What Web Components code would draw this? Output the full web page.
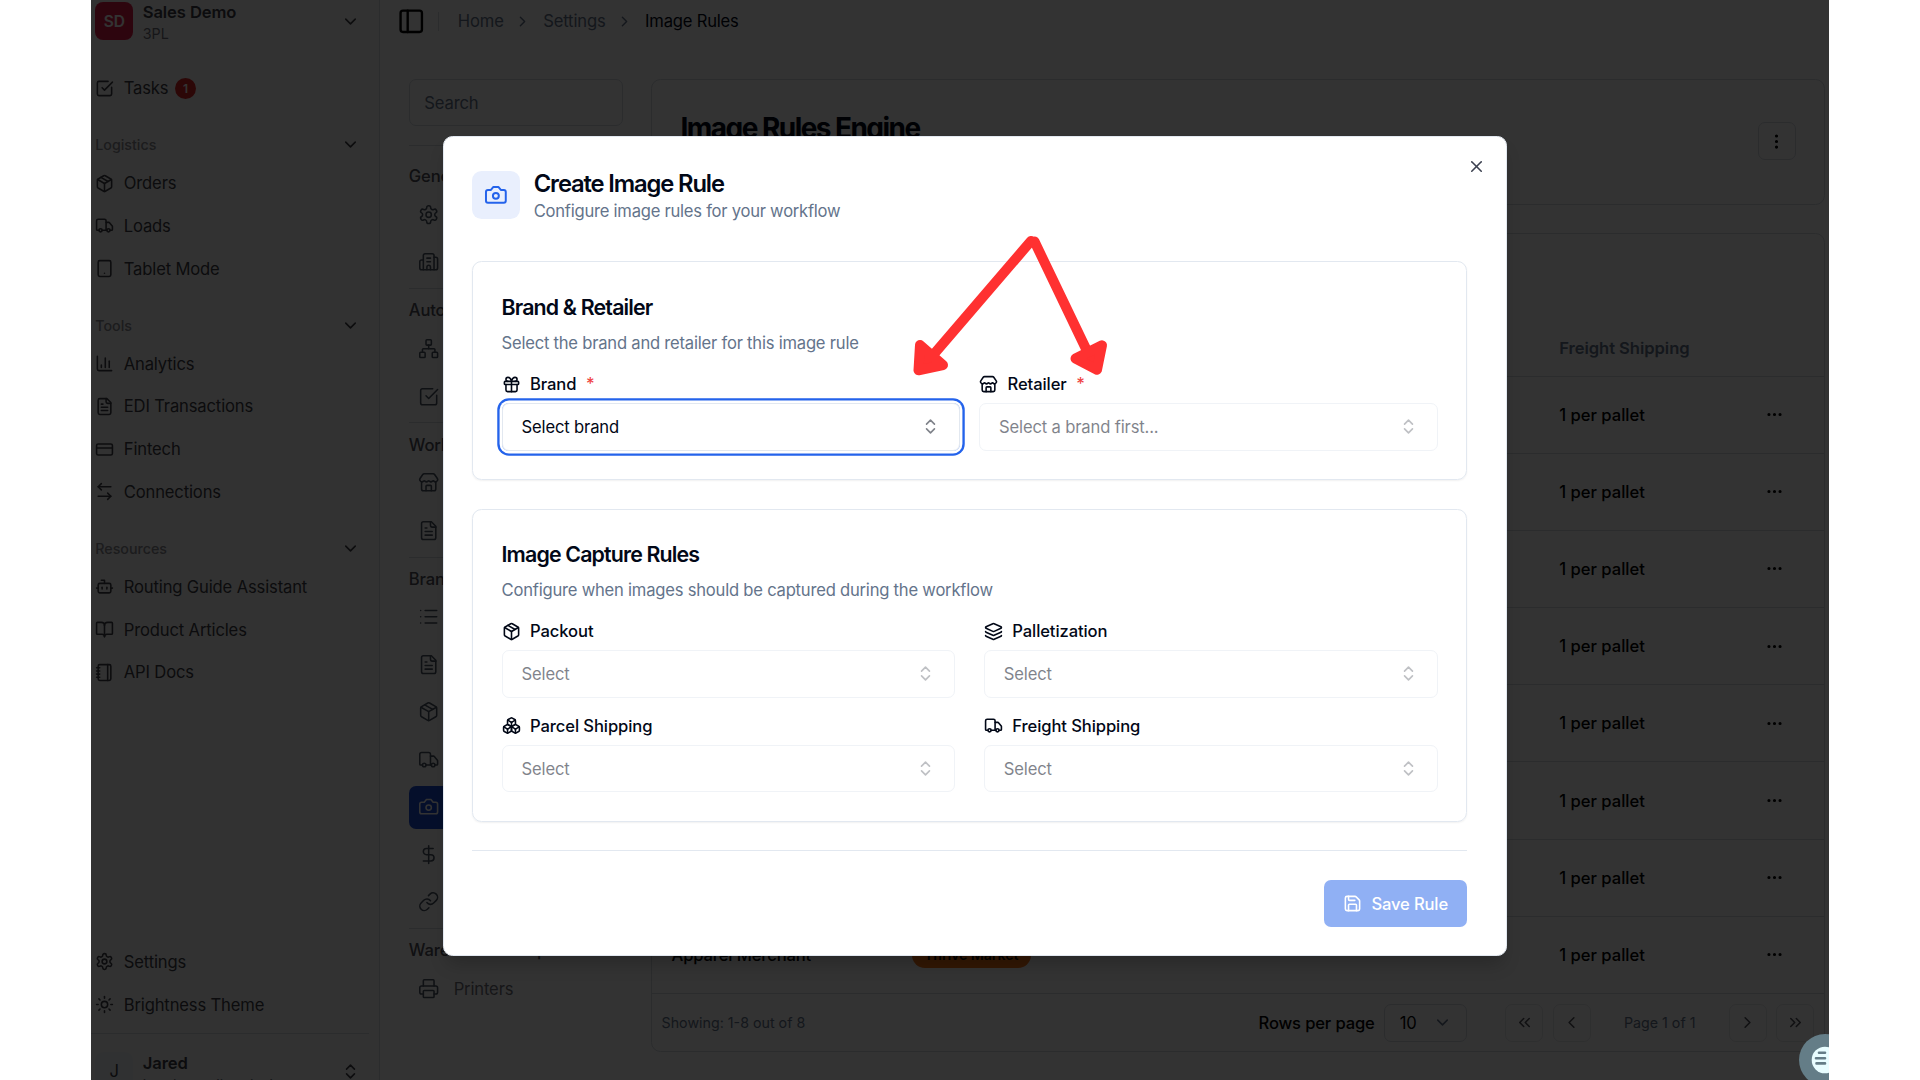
<!DOCTYPE html>
<html lang="en">
<head>
<meta charset="utf-8">
<title>Image Rules</title>
<style>
  body {
    margin: 0;
    background: #fff;
    font-family: Inter, "Liberation Sans", sans-serif;
    letter-spacing: -0.15px;
    overflow: hidden;
    --color-text: #020817;
    --color-muted: #64748b;
    --color-border: #e2e8f0;
    --color-primary: #2463eb;
    --font-size: 16.6px;
    --font-size-sm: 14.25px;
  }
</style>
</head>
<body>
<rule-app></rule-app>

<script>
const icons = {
  chevronDown: '<path d="m6 9 6 6 6-6"/>',
  chevronRight: '<path d="m9 18 6-6-6-6"/>',
  chevronLeft: '<path d="m15 18-6-6 6-6"/>',
  chevronsLeft: '<path d="m11 17-5-5 5-5"/><path d="m18 17-5-5 5-5"/>',
  chevronsRight: '<path d="m6 17 5-5-5-5"/><path d="m13 17 5-5-5-5"/>',
  upDown: '<path d="m7 15 5 5 5-5"/><path d="m7 9 5-5 5 5"/>',
  panel: '<rect width="18" height="18" x="3" y="3" rx="2"/><path d="M9 3v18"/>',
  task: '<path d="M21 10.5V19a2 2 0 0 1-2 2H5a2 2 0 0 1-2-2V5a2 2 0 0 1 2-2h11.5"/><path d="m9 11 3 3L22 4"/>',
  box: '<path d="M11 21.73a2 2 0 0 0 2 0l7-4A2 2 0 0 0 21 16V8a2 2 0 0 0-1-1.73l-7-4a2 2 0 0 0-2 0l-7 4A2 2 0 0 0 3 8v8a2 2 0 0 0 1 1.73z"/><path d="M12 22V12"/><path d="m3.3 7 8.7 5 8.7-5"/><path d="m7.5 4.27 9 5.15"/>',
  truck: '<path d="M14 18V6a2 2 0 0 0-2-2H4a2 2 0 0 0-2 2v11a1 1 0 0 0 1 1h2"/><path d="M15 18H9"/><path d="M19 18h2a1 1 0 0 0 1-1v-3.65a1 1 0 0 0-.22-.624l-3.48-4.35A1 1 0 0 0 17.52 8H14"/><circle cx="17" cy="18" r="2"/><circle cx="7" cy="18" r="2"/>',
  tablet: '<rect width="16" height="20" x="4" y="2" rx="2"/><path d="M12 18h.01"/>',
  chart: '<path d="M3 3v16a2 2 0 0 0 2 2h16"/><path d="M18 17V9"/><path d="M13 17V5"/><path d="M8 17v-3"/>',
  file: '<path d="M15 2H6a2 2 0 0 0-2 2v16a2 2 0 0 0 2 2h12a2 2 0 0 0 2-2V7Z"/><path d="M14 2v4a2 2 0 0 0 2 2h4"/><path d="M10 9H8"/><path d="M16 13H8"/><path d="M16 17H8"/>',
  card: '<rect width="20" height="14" x="2" y="5" rx="2"/><path d="M2 10h20"/>',
  swap: '<path d="m16 14 4 4-4 4"/><path d="M20 18H4"/><path d="m8 2-4 4 4 4"/><path d="M4 6h16"/>',
  bot: '<path d="M12 8V4H8"/><rect width="16" height="12" x="4" y="8" rx="2"/><path d="M2 14h2"/><path d="M20 14h2"/><path d="M15 13v2"/><path d="M9 13v2"/>',
  book: '<path d="M12 7v14"/><path d="M3 18a1 1 0 0 1-1-1V4a1 1 0 0 1 1-1h5a4 4 0 0 1 4 4 4 4 0 0 1 4-4h5a1 1 0 0 1 1 1v13a1 1 0 0 1-1 1h-6a3 3 0 0 0-3 3 3 3 0 0 0-3-3z"/>',
  notebook: '<path d="M2 6h4"/><path d="M2 10h4"/><path d="M2 14h4"/><path d="M2 18h4"/><rect width="16" height="20" x="4" y="2" rx="2"/><path d="M16 2v20"/>',
  gear: '<path d="M12.22 2h-.44a2 2 0 0 0-2 2v.18a2 2 0 0 1-1 1.73l-.43.25a2 2 0 0 1-2 0l-.15-.08a2 2 0 0 0-2.73.73l-.22.38a2 2 0 0 0 .73 2.73l.15.1a2 2 0 0 1 1 1.72v.51a2 2 0 0 1-1 1.74l-.15.09a2 2 0 0 0-.73 2.73l.22.38a2 2 0 0 0 2.73.73l.15-.08a2 2 0 0 1 2 0l.43.25a2 2 0 0 1 1 1.73V20a2 2 0 0 0 2 2h.44a2 2 0 0 0 2-2v-.18a2 2 0 0 1 1-1.73l.43-.25a2 2 0 0 1 2 0l.15.08a2 2 0 0 0 2.73-.73l.22-.39a2 2 0 0 0-.73-2.73l-.15-.08a2 2 0 0 1-1-1.74v-.5a2 2 0 0 1 1-1.74l.15-.09a2 2 0 0 0 .73-2.73l-.22-.38a2 2 0 0 0-2.73-.73l-.15.08a2 2 0 0 1-2 0l-.43-.25a2 2 0 0 1-1-1.73V4a2 2 0 0 0-2-2z"/><circle cx="12" cy="12" r="3"/>',
  sun: '<circle cx="12" cy="12" r="4"/><path d="M12 2v2"/><path d="M12 20v2"/><path d="m4.93 4.93 1.41 1.41"/><path d="m17.66 17.66 1.41 1.41"/><path d="M2 12h2"/><path d="M20 12h2"/><path d="m6.34 17.66-1.41 1.41"/><path d="m19.07 4.93-1.41 1.41"/>',
  building: '<path d="M10 12h4"/><path d="M10 8h4"/><path d="M14 21v-3a2 2 0 0 0-4 0v3"/><path d="M6 10H4a2 2 0 0 0-2 2v7a2 2 0 0 0 2 2h16a2 2 0 0 0 2-2V9a2 2 0 0 0-2-2h-2"/><path d="M6 21V5a2 2 0 0 1 2-2h8a2 2 0 0 1 2 2v16"/>',
  network: '<rect x="16" y="16" width="6" height="6" rx="1"/><rect x="2" y="16" width="6" height="6" rx="1"/><rect x="9" y="2" width="6" height="6" rx="1"/><path d="M5 16v-3a1 1 0 0 1 1-1h12a1 1 0 0 1 1 1v3"/><path d="M12 12V8"/>',
  shop: '<path d="M15 21v-5a1 1 0 0 0-1-1h-4a1 1 0 0 0-1 1v5"/><path d="M17.774 10.31a1.12 1.12 0 0 0-1.549 0 2.5 2.5 0 0 1-3.451 0 1.12 1.12 0 0 0-1.548 0 2.5 2.5 0 0 1-3.452 0 1.12 1.12 0 0 0-1.549 0 2.5 2.5 0 0 1-3.77-3.248l2.889-4.184A2 2 0 0 1 7 2h10a2 2 0 0 1 1.653.873l2.895 4.192a2.5 2.5 0 0 1-3.774 3.244"/><path d="M4 10.95V19a2 2 0 0 0 2 2h12a2 2 0 0 0 2-2v-8.05"/>',
  list: '<path d="M3 5h.01"/><path d="M3 12h.01"/><path d="M3 19h.01"/><path d="M8 5h13"/><path d="M8 12h13"/><path d="M8 19h13"/>',
  camera: '<path d="M14.5 4h-5L7 7H4a2 2 0 0 0-2 2v9a2 2 0 0 0 2 2h16a2 2 0 0 0 2-2V9a2 2 0 0 0-2-2h-3l-2.5-3z"/><circle cx="12" cy="13" r="3"/>',
  dollar: '<path d="M12 2v20"/><path d="M17 5H9.5a3.5 3.5 0 0 0 0 7h5a3.5 3.5 0 0 1 0 7H6"/>',
  link: '<path d="M10 13a5 5 0 0 0 7.54.54l3-3a5 5 0 0 0-7.07-7.07l-1.72 1.71"/><path d="M14 11a5 5 0 0 0-7.54-.54l-3 3a5 5 0 0 0 7.07 7.07l1.71-1.71"/>',
  printer: '<path d="M6 18H4a2 2 0 0 1-2-2v-5a2 2 0 0 1 2-2h16a2 2 0 0 1 2 2v5a2 2 0 0 1-2 2h-2"/><path d="M6 9V3a1 1 0 0 1 1-1h10a1 1 0 0 1 1 1v6"/><rect x="6" y="14" width="12" height="8" rx="1"/>',
  close: '<path d="M18 6 6 18"/><path d="m6 6 12 12"/>',
  gift: '<rect x="3" y="8" width="18" height="4" rx="1"/><path d="M12 8v13"/><path d="M19 12v7a2 2 0 0 1-2 2H7a2 2 0 0 1-2-2v-7"/><path d="M7.5 8a2.5 2.5 0 0 1 0-5A4.8 8 0 0 1 12 8a4.8 8 0 0 1 4.5-5 2.5 2.5 0 0 1 0 5"/>',
  layers: '<path d="M12.83 2.18a2 2 0 0 0-1.66 0L2.6 6.08a1 1 0 0 0 0 1.83l8.58 3.91a2 2 0 0 0 1.66 0l8.58-3.9a1 1 0 0 0 0-1.83z"/><path d="M2 12a1 1 0 0 0 .58.91l8.6 3.91a2 2 0 0 0 1.65 0l8.58-3.9A1 1 0 0 0 22 12"/><path d="M2 17a1 1 0 0 0 .58.91l8.6 3.91a2 2 0 0 0 1.65 0l8.58-3.9A1 1 0 0 0 22 17"/>',
  boxes: '<path d="M2.97 12.92A2 2 0 0 0 2 14.63v3.24a2 2 0 0 0 .97 1.71l3 1.8a2 2 0 0 0 2.06 0L12 19v-5.5l-5-3-4.03 2.42Z"/><path d="m7 16.5-4.74-2.85"/><path d="m7 16.5 5-3"/><path d="M7 16.5v5.17"/><path d="M12 13.5V19l3.97 2.38a2 2 0 0 0 2.06 0l3-1.8a2 2 0 0 0 .97-1.71v-3.24a2 2 0 0 0-.97-1.71L17 10.5l-5 3Z"/><path d="m17 16.5-5-3"/><path d="m17 16.5 4.74-2.85"/><path d="M17 16.5v5.17"/><path d="M7.97 4.42A2 2 0 0 0 7 6.13v4.37l5 3 5-3V6.13a2 2 0 0 0-.97-1.71l-3-1.8a2 2 0 0 0-2.06 0l-3 1.8Z"/><path d="M12 8 7.26 5.15"/><path d="m12 8 4.74-2.85"/><path d="M12 13.5V8"/>',
  save: '<path d="M15.2 3a2 2 0 0 1 1.4.6l3.8 3.8a2 2 0 0 1 .6 1.4V19a2 2 0 0 1-2 2H5a2 2 0 0 1-2-2V5a2 2 0 0 1 2-2z"/><path d="M17 21v-7a1 1 0 0 0-1-1H8a1 1 0 0 0-1 1v7"/><path d="M7 3v4a1 1 0 0 0 1 1h7"/>',
  dots: '<circle cx="12" cy="12" r="1"/><circle cx="19" cy="12" r="1"/><circle cx="5" cy="12" r="1"/>',
  dotsVertical: '<circle cx="12" cy="12" r="1"/><circle cx="12" cy="5" r="1"/><circle cx="12" cy="19" r="1"/>'
}

/** Base class: clones the static template of its subclass into a shadow root. */
class BaseElement extends HTMLElement {
  constructor() {
    super()
    this.attachShadow({ mode: 'open' })
  }

  connectedCallback() {
    if (!this.rendered) {
      this.rendered = true
      const template = document.createElement('template')
      template.innerHTML = this.render()
      this.shadowRoot.appendChild(template.content.cloneNode(true))
    }
  }
}

class AppIcon extends BaseElement {
  render() {
    const size = this.getAttribute('size') || '19'
    const stroke = this.getAttribute('stroke') || '2'
    return `
      <style>
        :host { display: inline-flex; flex: none; }
        svg { display: block; }
      </style>
      <svg width="${size}" height="${size}" viewBox="0 0 24 24" fill="none" stroke="currentColor"
        stroke-width="${stroke}" stroke-linecap="round" stroke-linejoin="round">${icons[this.getAttribute('name')]}</svg>
    `
  }
}

class SideItem extends BaseElement {
  render() {
    return `
      <style>
        :host {
          display: flex;
          align-items: center;
          gap: 9.5px;
          height: 38px;
          color: #3f3f46;
          font-size: var(--font-size);
        }
      </style>
      <app-icon name="${this.getAttribute('icon')}"></app-icon><slot></slot>
    `
  }
}

class SideGroup extends BaseElement {
  render() {
    return `
      <style>
        :host { display: flex; flex-direction: column; gap: 4.75px; margin-top: 19px; }
        header {
          display: flex;
          align-items: center;
          justify-content: space-between;
          height: 37px;
          margin-bottom: -3.75px;
          padding-right: 9.5px;
          font-size: var(--font-size-sm);
          font-weight: 500;
          letter-spacing: 0;
          color: #8b8b92;
        }
        app-icon { color: #3f3f46; }
      </style>
      <header>${this.getAttribute('label')}<app-icon name="chevronDown"></app-icon></header>
      <slot></slot>
    `
  }
}

class AppSidebar extends BaseElement {
  render() {
    return `
      <style>
        :host {
          display: flex;
          flex-direction: column;
          box-sizing: border-box;
          width: 289.3px;
          padding-left: 4.25px;
          background: #fafafa;
          border-right: 1px solid var(--color-border);
        }
        .account { display: flex; align-items: center; height: 42px; padding-right: 19.5px; color: #3f3f46; }
        .logo {
          display: grid;
          place-items: center;
          width: 38px;
          height: 38px;
          border-radius: 8px;
          background: #e11d48;
          color: #fff;
          font-size: 15.5px;
          font-weight: 600;
        }
        .names { flex: 1; margin: 3px 0 0 9.5px; line-height: 22px; font-size: var(--font-size-sm); letter-spacing: 0; color: #71717a; }
        .names b { display: block; font-size: var(--font-size); font-weight: 600; letter-spacing: -0.1px; color: #3f3f46; }
        .tasks { margin-top: 27px; }
        .badge {
          display: grid;
          place-items: center;
          width: 21px;
          height: 21px;
          margin-left: -3px;
          border-radius: 50%;
          background: #dc2626;
          color: #fff;
          font-size: 12px;
          font-weight: 600;
        }
        side-group { margin-right: 10px; }
        .bottom { display: flex; flex-direction: column; gap: 4.75px; margin-top: auto; }
        .user {
          display: flex;
          box-sizing: border-box;
          height: 47px;
          margin: 9.5px 10px 0 -4.25px;
          padding: 18px 9.5px 0 4.25px;
          border-top: 1px solid var(--color-border);
          overflow: hidden;
        }
        .avatar { background: #f1f5f9; color: #3f3f46; font-weight: 400; font-size: var(--font-size); }
        .user .names { margin-top: 0; }
        .user app-icon { margin-top: 10px; color: #3f3f46; }
      </style>
      <div class="account">
        <span class="logo">SD</span>
        <span class="names"><b>Sales Demo</b>3PL</span>
        <app-icon name="chevronDown"></app-icon>
      </div>
      <side-item class="tasks" icon="task">Tasks <span class="badge">1</span></side-item>
      <side-group label="Logistics">
        <side-item icon="box">Orders</side-item>
        <side-item icon="truck">Loads</side-item>
        <side-item icon="tablet">Tablet Mode</side-item>
      </side-group>
      <side-group label="Tools">
        <side-item icon="chart">Analytics</side-item>
        <side-item icon="file">EDI Transactions</side-item>
        <side-item icon="card">Fintech</side-item>
        <side-item icon="swap">Connections</side-item>
      </side-group>
      <side-group label="Resources">
        <side-item icon="bot">Routing Guide Assistant</side-item>
        <side-item icon="book">Product Articles</side-item>
        <side-item icon="notebook">API Docs</side-item>
      </side-group>
      <div class="bottom">
        <side-item icon="gear">Settings</side-item>
        <side-item icon="sun">Brightness Theme</side-item>
      </div>
      <div class="user">
        <span class="logo avatar">J</span>
        <span class="names"><b>Jared</b>jared@retailreadyai</span>
        <app-icon name="upDown"></app-icon>
      </div>
    `
  }
}

class CrumbBar extends BaseElement {
  render() {
    return `
      <style>
        :host {
          display: flex;
          align-items: center;
          height: 42px;
          padding-left: 16.5px;
          font-size: var(--font-size);
          color: var(--color-muted);
        }
        i { width: 1px; height: 19px; margin: 0 19px 0 12.5px; background: var(--color-border); }
        .panel { color: #000; }
        .sep { margin: 0 12px 0 10.5px; }
        b { font-weight: 400; letter-spacing: -0.2px; color: var(--color-text); }
      </style>
      <app-icon class="panel" name="panel" size="28.5"></app-icon><i></i>
      Home<app-icon class="sep" name="chevronRight" size="17"></app-icon>
      Settings<app-icon class="sep" name="chevronRight" size="17"></app-icon>
      <b>Image Rules</b>
    `
  }
}

class SettingsLink extends BaseElement {
  render() {
    return `
      <style>
        :host {
          display: flex;
          align-items: center;
          gap: 14.5px;
          box-sizing: border-box;
          height: 42.75px;
          margin-bottom: 4.75px;
          padding-left: 9px;
          border-radius: 7px;
          font-size: var(--font-size);
          color: #71717a;
        }
        app-icon { color: #4b5563; }
        :host([active]) { background: #1d4ed8; color: #fff; }
        :host([active]) app-icon { color: #fff; }
      </style>
      <app-icon name="${this.getAttribute('icon')}" size="21.375" stroke="1.75"></app-icon><slot></slot>
    `
  }
}

class SettingsGroup extends BaseElement {
  render() {
    return `
      <style>
        :host { display: block; box-sizing: border-box; border-top: 1px solid var(--color-border); }
        header {
          height: 24px;
          padding: 9.2px 0 5px;
          line-height: 24px;
          font-size: var(--font-size);
          font-weight: 500;
          color: #52525b;
          white-space: nowrap;
        }
      </style>
      <header>${this.getAttribute('label')}</header>
      <slot></slot>
    `
  }
}

class SettingsNav extends BaseElement {
  render() {
    return `
      <style>
        :host { display: flex; flex-direction: column; width: 213.75px; }
        .search {
          box-sizing: border-box;
          height: 47.5px;
          margin-bottom: 19px;
          padding-left: 14.5px;
          border: 1px solid var(--color-border);
          border-radius: 7px;
          line-height: 47px;
          font-size: var(--font-size);
          color: var(--color-muted);
        }
        .first { padding-top: 9px; }
      </style>
      <div class="search">Search</div>
      <settings-group class="first" label="General">
        <settings-link icon="gear"></settings-link>
        <settings-link icon="building"></settings-link>
      </settings-group>
      <settings-group label="Automation">
        <settings-link icon="network"></settings-link>
        <settings-link icon="task"></settings-link>
      </settings-group>
      <settings-group label="Workflow">
        <settings-link icon="shop"></settings-link>
        <settings-link icon="file"></settings-link>
      </settings-group>
      <settings-group label="Brand">
        <settings-link icon="list"></settings-link>
        <settings-link icon="file"></settings-link>
        <settings-link icon="box"></settings-link>
        <settings-link icon="truck"></settings-link>
        <settings-link icon="camera" active></settings-link>
        <settings-link icon="dollar"></settings-link>
        <settings-link icon="link"></settings-link>
      </settings-group>
      <settings-group label="Warehouse Setup">
        <settings-link icon="printer">Printers</settings-link>
      </settings-group>
    `
  }
}

class RuleTable extends BaseElement {
  render() {
    // only the last row shows its brand and retailer
    const rows = Array.from({ length: 8 }, (_, i) => `
      <div class="row">
        <span class="brand">${i === 7 ? 'Apparel Merchant' : ''}</span>
        <span class="retailer">${i === 7 ? '<em>Thrive Market</em>' : ''}</span>
        <span class="freight">1 per pallet</span>
        <app-icon name="dots"></app-icon>
      </div>`).join('')

    return `
      <style>
        :host {
          display: block;
          box-sizing: border-box;
          height: 818.5px;
          border: 1px solid var(--color-border);
          border-radius: 9.5px;
          font-size: var(--font-size);
          font-weight: 500;
          color: #000;
        }
        .toolbar { height: 85.5px; }
        .row {
          display: flex;
          align-items: center;
          box-sizing: border-box;
          height: 77.19px;
          padding: 0 40px 0 19.5px;
          border-bottom: 1px solid var(--color-border);
        }
        .brand { width: 240px; }
        .retailer { flex: 1; }
        .freight { width: 205.5px; letter-spacing: 0; }
        em {
          display: inline-block;
          padding: 0 12.5px;
          border-radius: 13px;
          background: #f97316;
          line-height: 26px;
          font-style: normal;
          font-size: var(--font-size-sm);
          font-weight: 600;
        }
        .head { height: 57px; color: var(--color-muted); }
        .head .freight { font-weight: 600; letter-spacing: -0.05px; }
        .pager { display: flex; align-items: center; height: 57.5px; padding: 0 9.5px; }
        small { font-size: var(--font-size-sm); font-weight: 400; letter-spacing: 0; color: var(--color-muted); }
        .spacer { flex: 1; }
        .size, .nav {
          display: flex;
          align-items: center;
          box-sizing: border-box;
          height: 38px;
          border: 1px solid var(--color-border);
          border-radius: 7px;
        }
        .size { justify-content: space-between; width: 83px; margin: 0 38px 0 9.5px; padding: 0 14.5px; font-weight: 400; }
        .size app-icon { color: #64748b; }
        .nav { justify-content: center; width: 38px; border-color: #e6e8ec; color: #52525b; }
        .nav + .nav { margin-left: 9.5px; }
        .page { width: 138px; text-align: center; }
      </style>
      <div class="toolbar"></div>
      <div class="row head">
        <span class="brand"></span><span class="retailer"></span>
        <span class="freight">Freight Shipping</span>
        <app-icon style="visibility: hidden" name="dots"></app-icon>
      </div>
      ${rows}
      <div class="pager">
        <small>Showing: 1-8 out of 8</small>
        <span class="spacer"></span>
        <span>Rows per page</span>
        <span class="size">10<app-icon name="chevronDown"></app-icon></span>
        <span class="nav"><app-icon name="chevronsLeft"></app-icon></span>
        <span class="nav"><app-icon name="chevronLeft"></app-icon></span>
        <small class="page">Page 1 of 1</small>
        <span class="nav"><app-icon name="chevronRight"></app-icon></span>
        <span class="nav"><app-icon name="chevronsRight"></app-icon></span>
      </div>
    `
  }
}

class TitleCard extends BaseElement {
  render() {
    return `
      <style>
        :host {
          display: flex;
          justify-content: space-between;
          box-sizing: border-box;
          height: 126px;
          margin-bottom: 28.5px;
          padding: 29.5px 28px 0 28.5px;
          border: 1px solid var(--color-border);
          border-radius: 9.5px;
        }
        h1 {
          margin: 0;
          line-height: 38px;
          font-size: 28px;
          font-weight: 700;
          letter-spacing: -1.55px;
          color: var(--color-text);
        }
        .more {
          display: grid;
          place-items: center;
          box-sizing: border-box;
          width: 38px;
          height: 38px;
          margin-top: 13px;
          border: 1px solid var(--color-border);
          border-radius: 7px;
        }
      </style>
      <h1><slot></slot></h1>
      <span class="more"><app-icon name="dotsVertical"></app-icon></span>
    `
  }
}

class SelectField extends BaseElement {
  render() {
    return `
      <style>
        :host { display: block; font-size: var(--font-size); color: var(--color-text); }
        label { display: flex; align-items: center; height: 23.75px; font-weight: 500; letter-spacing: -0.1px; }
        label app-icon { margin-right: 9.5px; }
        :host([required]) label::after { content: "*"; margin-left: 9.5px; color: #ef4444; }
        .control {
          display: flex;
          align-items: center;
          justify-content: space-between;
          box-sizing: border-box;
          height: 47.5px;
          margin-top: 7px;
          padding: 0 19px;
          border: 1px solid var(--color-border);
          border-radius: 7px;
          opacity: 0.5;
        }
        .control app-icon { opacity: 0.5; }
        :host([focused]) .control {
          opacity: 1;
          box-shadow: 0 0 0 2.4px #fff, 0 0 0 4.75px var(--color-primary);
        }
      </style>
      <label><app-icon name="${this.getAttribute('icon')}"></app-icon>${this.getAttribute('label')}</label>
      <div class="control"><slot></slot><app-icon name="upDown"></app-icon></div>
    `
  }
}

class FieldCard extends BaseElement {
  render() {
    return `
      <style>
        :host {
          display: block;
          box-sizing: border-box;
          padding: 28.5px;
          border: 1px solid var(--color-border);
          border-radius: 9.5px;
          box-shadow: 0 1px 2px rgba(0, 0, 0, 0.06);
        }
        h3 {
          margin: 0;
          line-height: 33.25px;
          font-size: 21.375px;
          font-weight: 600;
          letter-spacing: -0.84px;
        }
        p {
          margin: 7.8px 0 16.5px;
          line-height: 23.75px;
          font-size: var(--font-size);
          letter-spacing: -0.22px;
          color: var(--color-muted);
        }
        .fields { display: grid; grid-template-columns: 1fr 1fr; gap: 16.5px var(--field-gap, 28.5px); }
      </style>
      <h3>${this.getAttribute('heading')}</h3>
      <p>${this.getAttribute('hint')}</p>
      <div class="fields"><slot></slot></div>
    `
  }
}

class RuleDialog extends BaseElement {
  render() {
    return `
      <style>
        :host {
          display: block;
          box-sizing: border-box;
          width: 1064px;
          height: 820px;
          padding: 34px 38.5px 0 28.5px;
          border: 1px solid var(--color-border);
          border-radius: 9.5px;
          background: #fff;
          color: var(--color-text);
          box-shadow: 0 12px 18px -4px rgba(0, 0, 0, 0.2);
        }
        header { display: flex; height: 90.2px; }
        .mark {
          display: grid;
          place-items: center;
          width: 47.5px;
          height: 47.5px;
          margin-right: 14.25px;
          border-radius: 9.5px;
          background: #e9effd;
          color: var(--color-primary);
        }
        h2 {
          margin: -1px 0 0;
          line-height: 28.5px;
          font-size: 23.75px;
          font-weight: 600;
          letter-spacing: -1.13px;
        }
        p { margin: 1.7px 0 0; line-height: 23.75px; font-size: var(--font-size); letter-spacing: -0.25px; color: var(--color-muted); }
        .close { margin: -14.8px -18.500px 0 auto; color: #3c4150; }
        .brand { --field-gap: 19px; margin-bottom: 28.5px; }
        footer { display: flex; justify-content: flex-end; margin-top: 28.5px; padding-top: 28.5px; border-top: 1px solid var(--color-border); }
        .save {
          display: flex;
          align-items: center;
          gap: 9.5px;
          box-sizing: border-box;
          height: 47.5px;
          padding: 0 19px;
          border-radius: 7px;
          background: var(--color-primary);
          color: #fff;
          font-size: var(--font-size);
          font-weight: 500;
          opacity: 0.5;
        }
      </style>
      <header>
        <span class="mark"><app-icon name="camera" size="23.75"></app-icon></span>
        <div>
          <h2>Create Image Rule</h2>
          <p>Configure image rules for your workflow</p>
        </div>
        <app-icon class="close" name="close"></app-icon>
      </header>
      <field-card class="brand" heading="Brand &amp; Retailer" hint="Select the brand and retailer for this image rule">
        <select-field icon="gift" label="Brand" required focused>Select brand</select-field>
        <select-field icon="shop" label="Retailer" required>Select a brand first...</select-field>
      </field-card>
      <field-card heading="Image Capture Rules" hint="Configure when images should be captured during the workflow">
        <select-field icon="box" label="Packout">Select</select-field>
        <select-field icon="layers" label="Palletization">Select</select-field>
        <select-field icon="boxes" label="Parcel Shipping">Select</select-field>
        <select-field icon="truck" label="Freight Shipping">Select</select-field>
      </field-card>
      <footer><span class="save"><app-icon name="save"></app-icon>Save Rule</span></footer>
    `
  }
}

class CalloutArrows extends BaseElement {
  render() {
    return `
      <style>
        :host { display: block; }
        svg { display: block; }
      </style>
      <svg width="200" height="144" viewBox="910 234 200 144" fill="#ff3131" stroke="#ff3131"
        stroke-width="10" stroke-linecap="round" stroke-linejoin="round">
        <path d="M1031 241 934 354"/>
        <path d="M920 345 943 365 918.5 370.3Z"/>
        <path d="M1034.5 241.5 1088 353"/>
        <path d="M1102 345.3 1075.5 358.5 1097 369.7Z"/>
      </svg>
    `
  }
}

class ChatBubble extends BaseElement {
  render() {
    return `
      <style>
        :host { display: block; }
        svg { display: block; }
      </style>
      <svg width="52" height="52" viewBox="0 0 52 52">
        <circle cx="26" cy="26" r="26" fill="#647d87"/>
        <circle cx="26" cy="26" r="13.3" fill="#e8fdff"/>
        <path d="M20 18.7h6M17 24.2h9M17.5 29.4h8.500" stroke="#647d87" stroke-width="2.6" stroke-linecap="round"/>
      </svg>
    `
  }
}

class RuleApp extends BaseElement {
  render() {
    return `
      <style>
        :host {
          display: flex;
          position: relative;
          width: 1737.7px;
          height: 1080px;
          margin-left: 91px;
          overflow: hidden;
          background: #fff;
        }
        app-sidebar, main { --color-border: #d5dae2; }
        main { flex: 1; min-width: 0; }
        .content { display: flex; gap: 28.5px; padding: 36.5px 4px 0 28.5px; }
        .cards { flex: 1; }
        .overlay { position: absolute; inset: 0; background: rgba(0, 0, 0, 0.8); }
        rule-dialog { position: absolute; left: 351.5px; top: 136.3px; }
        callout-arrows { position: absolute; left: 819px; top: 234px; }
        chat-bubble { position: absolute; left: 1708px; top: 1034px; }
      </style>
      <app-sidebar></app-sidebar>
      <main>
        <crumb-bar></crumb-bar>
        <div class="content">
          <settings-nav></settings-nav>
          <div class="cards">
            <title-card>Image Rules Engine</title-card>
            <rule-table></rule-table>
          </div>
        </div>
      </main>
      <div class="overlay"></div>
      <rule-dialog></rule-dialog>
      <callout-arrows></callout-arrows>
      <chat-bubble></chat-bubble>
    `
  }
}

customElements.define('app-icon', AppIcon)
customElements.define('side-item', SideItem)
customElements.define('side-group', SideGroup)
customElements.define('app-sidebar', AppSidebar)
customElements.define('crumb-bar', CrumbBar)
customElements.define('settings-link', SettingsLink)
customElements.define('settings-group', SettingsGroup)
customElements.define('settings-nav', SettingsNav)
customElements.define('rule-table', RuleTable)
customElements.define('title-card', TitleCard)
customElements.define('select-field', SelectField)
customElements.define('field-card', FieldCard)
customElements.define('rule-dialog', RuleDialog)
customElements.define('callout-arrows', CalloutArrows)
customElements.define('chat-bubble', ChatBubble)
customElements.define('rule-app', RuleApp)
</script>
</body>
</html>
